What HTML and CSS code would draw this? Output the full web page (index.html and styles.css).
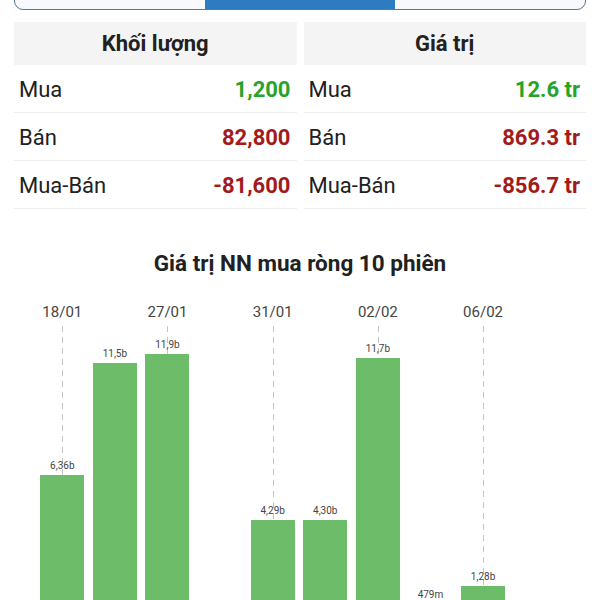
FILE: index.html
```html
<!DOCTYPE html>
<html lang="vi">
<head>
  <meta charset="UTF-8">
  <title>Giao dịch NN</title>
  <meta name="viewport" content="width=device-width, initial-scale=1.0">
  <link rel="stylesheet" href="styles.css">
</head>
<body>

  <div class="tabs">
    <div class="tab"></div>
    <div class="tab active"></div>
    <div class="tab"></div>
  </div>

  <div class="stats">
    <div class="panel">
      <div class="head">Khối lượng</div>
      <div class="row"><span>Mua</span><b class="up">1,200</b></div>
      <div class="row"><span>Bán</span><b class="down">82,800</b></div>
      <div class="row"><span>Mua-Bán</span><b class="down">-81,600</b></div>
    </div>
    <div class="panel">
      <div class="head">Giá trị</div>
      <div class="row"><span>Mua</span><b class="up">12.6 tr</b></div>
      <div class="row"><span>Bán</span><b class="down">869.3 tr</b></div>
      <div class="row"><span>Mua-Bán</span><b class="down">-856.7 tr</b></div>
    </div>
  </div>

  <h2 class="chart-title">Giá trị NN mua ròng 10 phiên</h2>

  <!-- 21.84px per tỷ, baseline sits just below the fold -->
  <div class="chart">
    <div class="col">
      <div class="date">18/01</div>
      <div class="plot marked"><span class="val">6,36b</span><div class="bar" style="height:139px"></div></div>
    </div>
    <div class="col">
      <div class="date"></div>
      <div class="plot"><span class="val">11,5b</span><div class="bar" style="height:251px"></div></div>
    </div>
    <div class="col">
      <div class="date">27/01</div>
      <div class="plot marked"><span class="val">11,9b</span><div class="bar" style="height:260px"></div></div>
    </div>
    <div class="col">
      <div class="date"></div>
      <div class="plot"></div>
    </div>
    <div class="col">
      <div class="date">31/01</div>
      <div class="plot marked"><span class="val">4,29b</span><div class="bar" style="height:94px"></div></div>
    </div>
    <div class="col">
      <div class="date"></div>
      <div class="plot"><span class="val">4,30b</span><div class="bar" style="height:94px"></div></div>
    </div>
    <div class="col">
      <div class="date">02/02</div>
      <div class="plot marked"><span class="val">11,7b</span><div class="bar" style="height:256px"></div></div>
    </div>
    <div class="col">
      <div class="date"></div>
      <div class="plot"><span class="val">479m</span><div class="bar" style="height:10px"></div></div>
    </div>
    <div class="col">
      <div class="date">06/02</div>
      <div class="plot marked"><span class="val">1,28b</span><div class="bar" style="height:28px"></div></div>
    </div>
    <div class="col">
      <div class="date"></div>
      <div class="plot"></div>
    </div>
  </div>

</body>
</html>
```

FILE: styles.css
```css
body {
  font-family: Roboto, 'Noto Sans', sans-serif;
  background-color: #fff;
  color: #212121;
  margin: 0;
  padding: 0;
}
.tabs {
  display: flex;
  height: 32px;
  margin: -22px 14px 0;
  box-sizing: border-box;
  border: 1.5px solid #5d7891;
  border-radius: 9px;
  background: #f7f9fc;
  overflow: hidden;
}
.tab {
  flex: 1;
}
.tab.active {
  background-color: #2f7bc1;
}
.stats {
  display: grid;
  grid-template-columns: 1fr 1fr;
  column-gap: 7px;
  padding: 0 14px;
  margin-top: 12px;
}
.head {
  height: 43px;
  line-height: 44px;
  background-color: #f4f4f4;
  text-align: center;
  font-size: 22px;
  font-weight: bold;
}
.row {
  display: flex;
  justify-content: space-between;
  align-items: center;
  height: 47px;
  padding: 2px 6px 0 5px;
  box-sizing: border-box;
  height: 48px;
  border-bottom: 1px solid #eeeeee;
  font-size: 22px;
}
.row b {
  font-weight: bold;
}
.up {
  color: #27a32b;
}
.down {
  color: #a31a1a;
}
.chart-title {
  margin: 41px 0 0;
  text-align: center;
  font-size: 22.5px;
  line-height: 26px;
  font-weight: bold;
}
.chart {
  display: flex;
  padding: 0 38px 0 36px;
  margin-top: 28px;
}
.col {
  flex: 1;
  display: flex;
  flex-direction: column;
  align-items: center;
}
.date {
  height: 18px;
  line-height: 16px;
  font-size: 15px;
  color: #444;
}
.plot {
  position: relative;
  height: 292px;
  width: 100%;
  display: flex;
  flex-direction: column;
  justify-content: flex-end;
  align-items: center;
}
.plot.marked::before {
  content: '';
  position: absolute;
  top: 4px;
  bottom: 0;
  left: 50%;
  width: 1px;
  background: repeating-linear-gradient(to bottom, #c4c4c4 0 6px, transparent 6px 11px);
}
.val {
  position: relative;
  font-size: 10px;
  line-height: 12px;
  color: #444;
  margin-bottom: 3px;
}
.bar {
  position: relative;
  width: 44px;
  background-color: #6dbc6a;
}
```
